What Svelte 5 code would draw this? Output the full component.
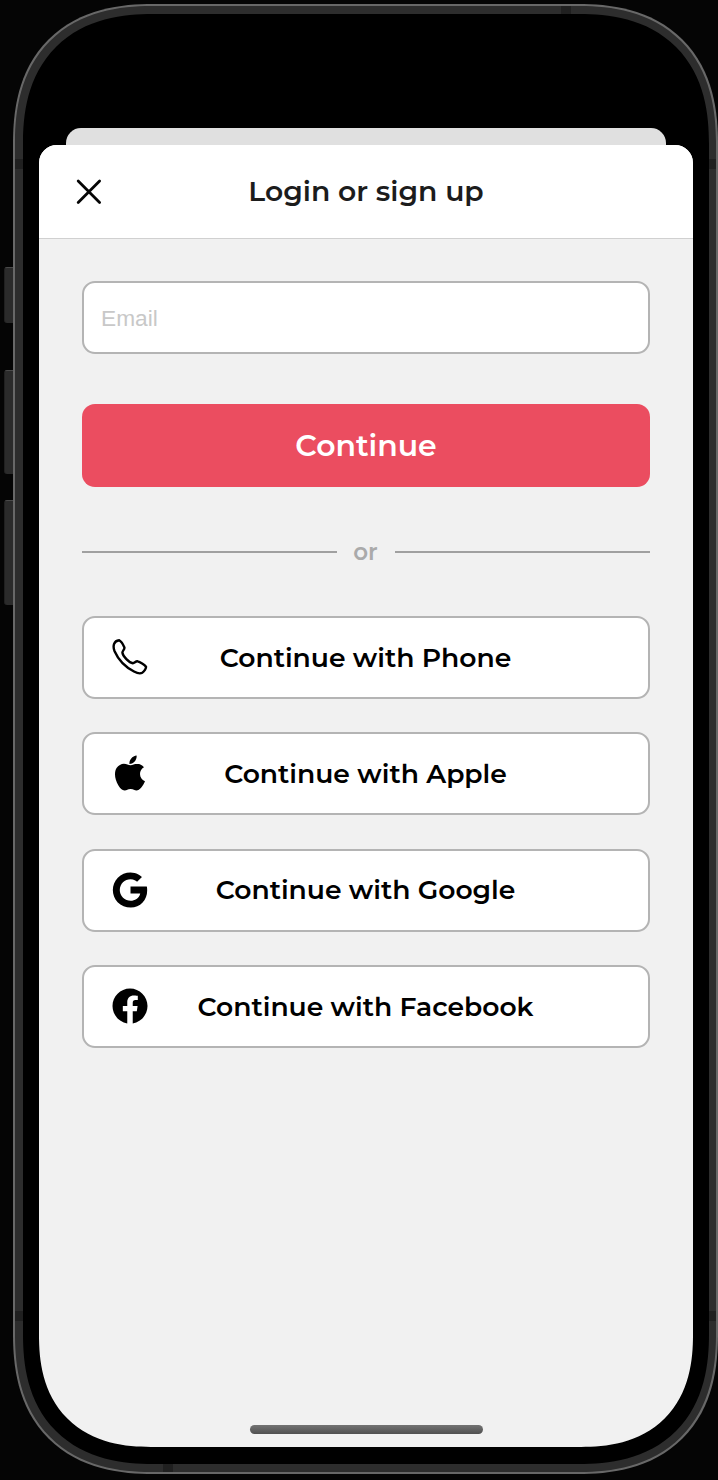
<script>
  const providers = [
    { name: 'Phone', icon: 'phone' },
    { name: 'Apple', icon: 'apple' },
    { name: 'Google', icon: 'google' },
    { name: 'Facebook', icon: 'facebook' }
  ];
</script>

<div class="page">
  <span class="key mute"></span>
  <span class="key up"></span>
  <span class="key down"></span>

  <div class="phone">
    <span class="band top"></span>
    <span class="band bottom"></span>
    <span class="band left high"></span>
    <span class="band right high"></span>
    <span class="band left low"></span>
    <span class="band right low"></span>

    <div class="bezel">
      <div class="behind"></div>
      <div class="sheet">
        <header>
          <button class="close" aria-label="Close">
            <svg width="26" height="26" viewBox="0 0 26 26">
              <path d="M2.2 2 23.6 23.4M23.6 2 2.2 23.4" fill="none" stroke="#050505" stroke-width="2.8" stroke-linecap="round" />
            </svg>
          </button>
          <h1>Login or sign up</h1>
        </header>

        <main>
          <input type="email" placeholder="Email" />
          <button class="primary">Continue</button>
          <div class="divider"><i></i><span>or</span><i></i></div>
          <div class="providers">
            {#each providers as p}
              <button class="provider">
                <span class="icon">
                  {#if p.icon === 'phone'}
                    <svg width="36" height="36" viewBox="0 0 36 36">
                      <path d="M2.1 4.8C2.8 2.9 5.4 1.4 7.2 1.2C8.8 2.1 11.4 6.1 12.4 8.5C12.9 10.3 10.5 11.6 10.4 13.6C10.9 17.2 17 23.8 20.9 24.2C22.6 24.2 23.6 22 25.6 22.3C28 22.8 32.5 25.6 34 27.7C34.3 29.4 32.2 32.5 30.2 33.8C28.5 34.8 25.8 34.6 22 32.5C13.5 28 6 20 2.6 12.2C1.3 9 1.3 7 2.1 4.8Z" fill="none" stroke="#000" stroke-width="2.4" stroke-linejoin="round" />
                    </svg>
                  {:else if p.icon === 'apple'}
                    <svg width="40" height="40" viewBox="0 0 512 512">
                      <path d="M349.13 136.86c-40.32 0-57.36 19.24-85.44 19.24-28.79 0-50.75-19.1-85.69-19.1-34.2 0-70.67 20.88-93.83 56.45-32.52 50.16-27 144.63 25.67 225.11 18.84 28.81 44 61.12 77 61.47h.6c28.68 0 37.2-18.78 76.67-19h.6c38.88 0 46.68 18.89 75.24 18.89h.6c33-.35 59.51-36.15 78.35-64.85 13.56-20.64 18.6-31 29.04-54.35-76.19-28.92-88.43-136.93-13.08-178.34-23-28.8-55.32-45.48-85.79-45.48zM340.25 32c-24 1.63-52 16.91-68.4 36.86-14.88 18.08-27.12 44.9-22.32 70.91h1.92c25.56 0 51.72-15.39 67-35.11 14.72-18.77 25.88-45.37 21.8-72.66z" />
                    </svg>
                  {:else if p.icon === 'google'}
                    <svg width="40" height="40" viewBox="0 0 512 512">
                      <path d="M473.16 221.48l-2.26-9.59H262.46v88.22H387c-12.93 61.4-72.93 93.72-121.94 93.72-35.66 0-73.25-15-98.13-39.11a140.08 140.08 0 01-41.8-98.88c0-37.16 16.7-74.33 41-98.78s61-38.13 97.49-38.13c41.79 0 71.74 22.19 82.94 32.31l62.69-62.36C390.86 72.72 340.34 32 261.6 32c-60.75 0-119 23.27-161.58 65.71C58 139.5 36.25 199.93 36.25 256s20.58 113.48 61.3 155.6c43.51 44.92 105.13 68.4 168.58 68.4 57.73 0 112.45-22.62 151.45-63.66 38.34-40.4 58.17-96.3 58.17-154.9 0-24.67-2.48-39.32-2.59-39.96z" />
                    </svg>
                  {:else}
                    <svg width="40" height="40" viewBox="0 0 512 512">
                      <path d="M480 257.35c0-123.7-100.3-224-224-224s-224 100.3-224 224c0 111.8 81.9 204.47 189 221.29V322.12h-56.89v-64.77H221V208c0-56.13 33.45-87.16 84.61-87.16 24.51 0 50.15 4.38 50.15 4.38v55.13H327.5c-27.81 0-36.51 17.26-36.51 35v42h62.12l-9.92 64.77h-52.2v156.54C398.1 461.85 480 369.18 480 257.35z" />
                    </svg>
                  {/if}
                </span>
                <span class="label">Continue with {p.name}</span>
              </button>
            {/each}
          </div>
          <div class="home"></div>
        </main>
      </div>
    </div>
  </div>
</div>

<style>
  :global(body) {
    background: #050505;
    overflow: hidden;
  }
  .page,
  .page * {
    box-sizing: border-box;
  }
  .page {
    position: relative;
    width: 718px;
    height: 1480px;
    padding: 4px 0 0 13px;
    overflow: hidden;
    background: #050505;
    font-family: Montserrat, Inter, sans-serif;
  }
  button {
    font: inherit;
    border: 0;
    padding: 0;
    background: none;
  }
  .key {
    position: absolute;
    left: 4px;
    width: 12px;
    background: #2b2b2b;
    border-top: 1px solid #4a4a4a;
    border-left: 1px solid #202020;
    border-radius: 3px 0 0 3px;
  }
  .mute { top: 267px; height: 56px; }
  .up { top: 370px; height: 104px; }
  .down { top: 500px; height: 105px; }
  .phone {
    position: relative;
    width: 705px;
    height: 1470px;
    padding: 8px 7px 8px 8px;
    border: 2px solid #686868;
    border-radius: 122px;
    background: #2d2d2d;
  }
  .band {
    position: absolute;
    background: #202020;
  }
  .top { left: 546px; top: 0; width: 10px; height: 8px; }
  .bottom { left: 148px; bottom: 0; width: 10px; height: 8px; }
  .left { left: 0; width: 8px; height: 10px; }
  .right { right: 0; width: 7px; height: 10px; }
  .high { top: 153px; }
  .low { top: 1305px; }
  .bezel {
    display: flex;
    flex-direction: column;
    align-items: center;
    height: 100%;
    padding: 114px 16px 17px;
    border-radius: 112px;
    background: #000;
  }
  .behind {
    flex: none;
    width: 600px;
    height: 17px;
    border-radius: 15px 15px 0 0;
    background: #e0e0e0;
  }
  .sheet {
    width: 654px;
    flex: 1;
    display: flex;
    flex-direction: column;
    border-radius: 18px 18px 97px 97px;
    background: #f1f1f1;
    overflow: hidden;
  }
  @supports (corner-shape: superellipse(1.245)) {
    .phone {
      border-radius: 140px;
      corner-shape: superellipse(1.245);
    }
    .bezel {
      border-radius: 130px;
      corner-shape: superellipse(1.245);
    }
    .sheet {
      border-radius: 18px 18px 112px 112px;
      corner-shape: round round superellipse(1.245) superellipse(1.245);
    }
  }
  header {
    display: grid;
    grid-template-columns: 100px 1fr 100px;
    align-items: center;
    height: 94px;
    background: #fff;
    border-bottom: 1px solid #d0d0d0;
  }
  .close {
    justify-self: center;
    display: flex;
  }
  h1 {
    margin: 0 0 2px;
    text-align: center;
    font-size: 28.2px;
    line-height: 36px;
    font-weight: 600;
    color: #1c1c1c;
  }
  main {
    flex: 1;
    display: flex;
    flex-direction: column;
    padding: 42px 43px 13px;
  }
  input {
    height: 73px;
    padding: 1px 17px 0;
    border: 2px solid #b4b4b4;
    border-radius: 13px;
    background: #fff;
    font: 400 22.7px "Liberation Sans", sans-serif;
    outline: 0;
  }
  input::placeholder {
    color: #c8c8c8;
    opacity: 1;
  }
  .primary {
    height: 83px;
    margin-top: 50px;
    border-radius: 13px;
    background: #eb4d60;
    color: #fff;
    font-size: 29.9px;
    font-weight: 600;
  }
  .divider {
    display: flex;
    align-items: center;
    gap: 17px;
    height: 30px;
    margin-top: 50px;
    color: #aaa;
    font-size: 23px;
    font-weight: 600;
  }
  .divider i {
    flex: 1;
    height: 2px;
    background: #a0a0a0;
  }
  .divider span {
    width: 24px;
    display: flex;
    justify-content: center;
    padding-right: 1px;
  }
  .providers {
    display: flex;
    flex-direction: column;
    gap: 33.4px;
    margin-top: 49px;
  }
  .provider {
    display: grid;
    grid-template-columns: 92px 1fr 93px;
    align-items: center;
    height: 83px;
    border: 2px solid #b4b4b4;
    border-radius: 13px;
    background: #fff;
    color: #000;
  }
  .icon {
    display: flex;
    justify-content: center;
    padding-bottom: 1px;
  }
  .label {
    text-align: center;
    white-space: nowrap;
    font-size: 26.6px;
    line-height: 34px;
    font-weight: 600;
  }
  .home {
    width: 233px;
    height: 9px;
    margin: auto 166px 0 168px;
    border-radius: 5px;
    background: linear-gradient(#737373, #505050);
  }
</style>
